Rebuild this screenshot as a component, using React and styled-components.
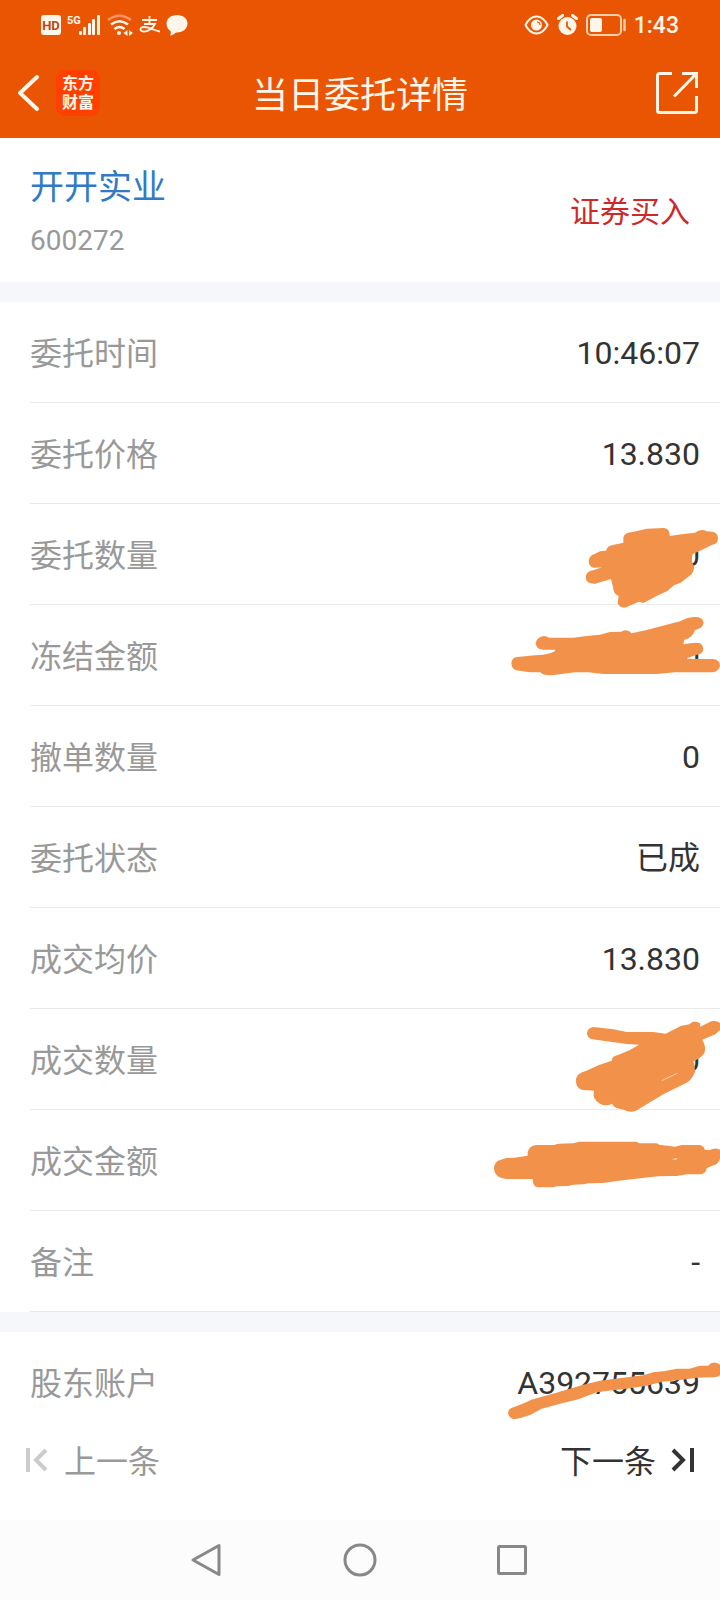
import React from 'react';
import styled, { createGlobalStyle } from 'styled-components';

const orange = '#ea5504';
const cream = '#fff6ea';
const ink = '#333333';
const gray = '#999999';
const marker = '#f2924a';

const GlobalStyle = createGlobalStyle`
  * {
    box-sizing: border-box;
  }

  body {
    margin: 0;
    background: #ffffff;
    font-family: Roboto, 'Noto Sans CJK SC', sans-serif;
    color: ${ink};
  }

  button {
    border: 0;
    padding: 0;
    background: none;
    font: inherit;
    color: inherit;
    cursor: pointer;
  }

  svg {
    display: block;
    flex: none;
  }
`;

const Page = styled.div`
  display: flex;
  flex-direction: column;
  min-height: 100vh;
`;

const Header = styled.header`
  background: ${orange};
  color: ${cream};
`;

const StatusBar = styled.div`
  display: flex;
  justify-content: space-between;
  height: 48px;
  padding: 1px 41px 0;
`;

const StatusGroup = styled.div`
  display: flex;
  align-items: center;
  gap: ${props => props.gap}px;
`;

const Clock = styled.time`
  padding-top: 2px;
  font-size: 23px;
  font-weight: 500;
  line-height: 45px;
`;

const TitleBar = styled.div`
  display: grid;
  grid-template-columns: 1fr auto 1fr;
  align-items: center;
  height: 90px;
  padding: 0 18px;
`;

const TitleLeft = styled.div`
  display: flex;
  align-items: center;
  gap: 16px;
`;

const Logo = styled.span`
  width: 44px;
  height: 46px;
  padding-top: 4px;
  border-radius: 9px;
  background: #ff4000;
  font-size: 16px;
  font-weight: 700;
  line-height: 19px;
  text-align: center;
`;

const Title = styled.h1`
  margin: 0;
  padding-top: 6px;
  font-size: 36px;
  font-weight: 400;
  line-height: 48px;
`;

const ShareButton = styled.button`
  justify-self: end;
`;

const Stock = styled.section`
  display: flex;
  align-items: center;
  justify-content: space-between;
  height: 144px;
  padding: 0 30px;
`;

const StockInfo = styled.div`
  padding-top: 8px;
`;

const StockName = styled.a`
  display: block;
  font-size: 34px;
  line-height: 48px;
  color: #337ac4;
  text-decoration: none;
`;

const StockCode = styled.div`
  margin-top: 6px;
  font-size: 28px;
  line-height: 48px;
  color: ${gray};
`;

const Side = styled.div`
  padding-top: 4px;
  font-size: 30px;
  line-height: 48px;
  color: #cc2929;
`;

const Divider = styled.div`
  height: 20px;
  background: #f6f7fa;
`;

const List = styled.dl`
  margin: 0;
`;

const Row = styled.div`
  position: relative;
  display: flex;
  align-items: center;
  justify-content: space-between;
  height: ${props => (props.$last ? 100 : 101)}px;
  margin-left: 30px;
  padding: 2px 20px 0 0;
  border-bottom: ${props => (props.$last ? 0 : 1)}px solid #ebebeb;
  font-size: 32px;
  line-height: 48px;
`;

const Label = styled.dt`
  padding-top: 2px;
  color: ${gray};
`;

const Value = styled.dd`
  margin: 0;
`;

// marker strokes lie over the value, flush with the screen edge
const Scribble = styled.svg`
  position: absolute;
  top: 0;
  right: 0;
  width: 240px;
  height: 101px;
  overflow: visible;
  z-index: 1;
  fill: ${marker};
`;

const Pager = styled.nav`
  display: flex;
  flex: 1;
  align-items: flex-start;
  justify-content: space-between;
  padding: 2px 25px 0;
`;

const PagerButton = styled.button`
  && {
    display: flex;
    align-items: center;
    gap: 15px;
    font-size: 32px;
    line-height: 48px;
    color: ${props => (props.disabled ? gray : ink)};
  }
`;

const PagerText = styled.span`
  padding-top: 4px;
`;

const NavBar = styled.nav`
  display: flex;
  align-items: center;
  justify-content: center;
  gap: 112px;
  height: 80px;
  background: #fcfcfc;
`;

const HdIcon = () => (
  <svg width="20" height="20" viewBox="0 0 20 20">
    <rect width="20" height="20" rx="3" fill={cream} />
    <text x="10" y="15" textAnchor="middle" fontSize="13" fontWeight="700" fill="#b94a12">
      HD
    </text>
  </svg>
);

const SignalIcon = () => (
  <svg width="34" height="22" viewBox="0 0 34 22" fill={cream}>
    <text x="0" y="10" fontFamily="Roboto" fontSize="11" fontWeight="700">
      5G
    </text>
    <rect x="12" y="17" width="3" height="4" rx="1" />
    <rect x="16" y="13" width="3" height="8" rx="1" />
    <rect x="21" y="9" width="3" height="12" rx="1" />
    <rect x="25" y="5" width="3" height="16" rx="1" />
    <rect x="30" y="1" width="3" height="20" rx="1" />
  </svg>
);

const WifiIcon = () => (
  <svg width="26" height="22" viewBox="0 0 26 22" fill="none" strokeWidth="2.6">
    <path d="M1 6Q12.500 -2.500 24 6" stroke="#ff9466" />
    <path d="M4 10.500Q12.500 4 21 10.500" stroke={cream} />
    <path d="M7.500 15Q12.500 11 17.500 15" stroke={cream} />
    <circle cx="12" cy="19" r="2" fill={cream} />
    <path d="M20.500 16v6l-4-3zM22 16v6l4-3z" fill={cream} />
  </svg>
);

const AlipayIcon = () => (
  <svg width="21" height="18" viewBox="0 0 21 18" fill="none" stroke={cream} strokeWidth="1.8">
    <path d="M3 4h15M10.500 0v8M5 8h11C14 12 9 16 4 15.500C0 14.500 1 11 5 11C10 11 15 14.500 21 15.500" />
  </svg>
);

const ChatIcon = () => (
  <svg width="22" height="22" viewBox="0 0 22 22" fill={cream}>
    <path d="M11 1C17 1 21.500 4.500 21.500 9.500S17 18.500 11 18.500L10 18.500C8 20.500 6 21.500 4 21.500C5 20 5 18.500 4.500 17C2 15.500 .5 13 .5 9.500C.5 4.500 5 1 11 1z" />
  </svg>
);

const EyeIcon = () => (
  <svg width="25" height="20" viewBox="0 0 25 20">
    <path
      d="M1.500 10C4 5 8 1.500 12.500 1.500S21 5 23.500 10C21 15 17 18.500 12.500 18.500S4 15 1.500 10z"
      fill="none"
      stroke={cream}
      strokeWidth="2"
      strokeLinejoin="round"
    />
    <circle cx="12.5" cy="10" r="5.5" fill={cream} />
    <path d="M13 7a3 3 0 0 1 3 3" fill="none" stroke={orange} strokeWidth="1.2" />
  </svg>
);

const AlarmIcon = () => (
  <svg width="21" height="22" viewBox="0 0 21 22">
    <circle cx="10.5" cy="12" r="9" fill={cream} />
    <path d="M1.500 4.500l4-3M19.500 4.500l-4-3" stroke={cream} strokeWidth="3" strokeLinecap="round" />
    <path d="M10 7.500v5l4 3.500" fill="none" stroke={orange} strokeWidth="1.8" />
  </svg>
);

const BatteryIcon = () => (
  <svg width="40" height="22" viewBox="0 0 40 22">
    <rect x="1" y="1" width="34" height="20" rx="4" fill="none" stroke="#ffd0aa" strokeWidth="2" />
    <rect x="4" y="4" width="12" height="14" rx="2" fill={cream} />
    <path d="M38.500 6v10" stroke="#ffd0aa" strokeWidth="2.5" strokeLinecap="round" />
  </svg>
);

const BackIcon = () => (
  <svg width="22" height="38" viewBox="2 0 22 38" fill="none" stroke={cream} strokeWidth="4">
    <path d="M21 3L4 19l17 16" strokeLinecap="round" />
  </svg>
);

const ShareIcon = () => (
  <svg width="47" height="44" viewBox="0 0 47 44" fill="none" stroke={cream} strokeWidth="3">
    <path d="M17 2.500H4.500a2 2 0 0 0-2 2v35a2 2 0 0 0 2 2h35a2 2 0 0 0 2-2V25" />
    <path d="M27 2.500h14.500V17M41 3L19 25.500" />
  </svg>
);

const PrevIcon = () => (
  <svg width="24" height="24" viewBox="0 0 24 24" fill="none" stroke="#cccccc" strokeWidth="4">
    <path d="M3 0v24M21 2L11 12l10 10" />
  </svg>
);

const NextIcon = () => (
  <svg width="24" height="24" viewBox="0 0 24 24" fill="none" stroke={ink} strokeWidth="4">
    <path d="M21 0v24M2 2l10 10L2 22" />
  </svg>
);

const strokes = {
  quantity: {
    viewBox: '0 12 720 303',
    d: 'M430 118Q428 103 445 98L468 94L500 86L552 84Q570 86 569 108L605 103L645 98Q663 84 680 94L697 95Q714 98 714 115Q714 132 697 134L665 150L638 163Q632 185 642 198Q642 216 633 224L602 248L582 256L562 273L530 288L490 309L477 305L438 322Q420 326 413 310L416 288Q400 282 399 262L393 237L345 251Q317 252 317 230Q320 212 342 210L366 202L340 203Q326 198 326 182Q329 165 344 162L360 154L378 152Q382 136 402 134L430 128Z',
  },
  frozen: {
    viewBox: '0 315 720 303',
    d: 'M94 490Q95 472 112 471L165 466Q200 466 225 454V449L190 449Q166 446 167 428Q172 410 192 408Q202 409 206 413H280L320 408L360 404L390 396L424 395Q442 384 455 400L500 390L560 374L600 364Q625 350 650 351Q669 353 671 369Q667 386 645 390L640 401Q630 416 613 419L610 433L630 430Q650 426 661 430Q672 440 669 452Q664 463 648 465L617 476L665 477L700 477Q720 480 720 497Q716 515 698 517H585L530 522H370L325 517H285L222 525Q190 528 181 517L150 517L108 511Q95 506 94 490Z',
  },
  dealt: {
    viewBox: '0 -3 720 303',
    d: 'M321 70Q322 53 341 51L400 58L440 66H520L557 71L602 48L628 43Q642 27 660 40L661 50L694 34Q710 30 720 39V60L706 73L667 89Q680 112 673 130Q661 146 640 154Q645 166 645 185Q635 210 620 218L550 253L468 302Q450 310 431 299L410 294Q399 290 397 281Q375 290 360 281Q335 267 342 242L304 239Q286 232 288 207Q290 190 318 183Q355 163 395 152Q396 138 414 135L450 120L477 104L440 102L337 88Q321 84 321 70Z',
  },
  amount: {
    viewBox: '0 300 720 303',
    d: 'M42 477Q42 453 63 449L79 444L103 443L143 437V426Q147 408 168 405H222L235 401L280 400L298 395H470L478 400L530 400L538 404L585 410L605 405H660Q674 410 674 419L690 420Q704 411 720 419V446Q714 464 700 466L680 475Q678 494 655 493H620L590 498L535 499L480 505L410 513L370 519L325 520L310 523L280 524L265 528L230 529L220 532H173Q158 530 158 507H80Q44 504 42 477Z',
  },
  account: {
    viewBox: '0 6 720 303',
    d: 'M84 249Q84 234 105 230L135 218Q153 207 175 203L245 184L310 164L360 152L430 143L490 136L520 127L555 123L590 116H628L660 107L684 107Q700 90 720 104V136Q712 142 695 142L650 143L600 150L548 155L500 167L440 176L385 182L350 187L295 208L240 221L185 236L150 255Q126 264 102 268Q86 264 84 249Z',
  },
};

const orderRows = [
  { label: '委托时间', value: '10:46:07' },
  { label: '委托价格', value: '13.830' },
  { label: '委托数量', value: '0', cover: 'quantity' },
  { label: '冻结金额', value: '0', cover: 'frozen' },
  { label: '撤单数量', value: '0' },
  { label: '委托状态', value: '已成' },
  { label: '成交均价', value: '13.830' },
  { label: '成交数量', value: '0', cover: 'dealt' },
  { label: '成交金额', value: '0', cover: 'amount' },
  { label: '备注', value: '-' },
];

const DetailRow = ({ label, value, cover, last }) => (
  <Row $last={last}>
    <Label>{label}</Label>
    <Value>{value}</Value>
    {cover && (
      <Scribble viewBox={strokes[cover].viewBox} aria-hidden="true">
        <path d={strokes[cover].d} />
        {cover === 'dealt' && (
          <path d="M545 212L592 190" stroke="#fff0dc" strokeWidth="2" />
        )}
        {cover === 'amount' && <path d="M576 448L590 444V449z" fill="#fff0dc" />}
      </Scribble>
    )}
  </Row>
);

export default () => (
  <Page>
    <GlobalStyle />
    <Header>
      <StatusBar>
        <StatusGroup gap={6}>
          <HdIcon />
          <SignalIcon />
          <WifiIcon />
          <AlipayIcon />
          <ChatIcon />
        </StatusGroup>
        <StatusGroup gap={8}>
          <EyeIcon />
          <AlarmIcon />
          <BatteryIcon />
          <Clock>1:43</Clock>
        </StatusGroup>
      </StatusBar>
      <TitleBar>
        <TitleLeft>
          <button type="button" aria-label="返回">
            <BackIcon />
          </button>
          <Logo>
            东方
            <br />
            财富
          </Logo>
        </TitleLeft>
        <Title>当日委托详情</Title>
        <ShareButton type="button" aria-label="分享">
          <ShareIcon />
        </ShareButton>
      </TitleBar>
    </Header>
    <Stock>
      <StockInfo>
        <StockName href="#stock">开开实业</StockName>
        <StockCode>600272</StockCode>
      </StockInfo>
      <Side>证券买入</Side>
    </Stock>
    <Divider />
    <List>
      {orderRows.map(row => (
        <DetailRow key={row.label} {...row} />
      ))}
    </List>
    <Divider />
    <List>
      <DetailRow label="股东账户" value="A392755639" cover="account" last />
    </List>
    <Pager>
      <PagerButton type="button" disabled>
        <PrevIcon />
        <PagerText>上一条</PagerText>
      </PagerButton>
      <PagerButton type="button">
        <PagerText>下一条</PagerText>
        <NextIcon />
      </PagerButton>
    </Pager>
    <NavBar>
      <button type="button" aria-label="后退">
        <svg width="40" height="40" viewBox="0 0 40 40" fill="none" stroke="#888888" strokeWidth="3">
          <path d="M31 5.500V34.500L5 20z" strokeLinejoin="round" />
        </svg>
      </button>
      <button type="button" aria-label="主页">
        <svg width="40" height="40" viewBox="0 0 40 40" fill="none" stroke="#888888" strokeWidth="3">
          <circle cx="20" cy="20" r="15" />
        </svg>
      </button>
      <button type="button" aria-label="多任务">
        <svg width="40" height="40" viewBox="0 0 40 40" fill="none" stroke="#888888" strokeWidth="3">
          <rect x="6.5" y="6.5" width="27" height="27" rx="1" />
        </svg>
      </button>
    </NavBar>
  </Page>
);
